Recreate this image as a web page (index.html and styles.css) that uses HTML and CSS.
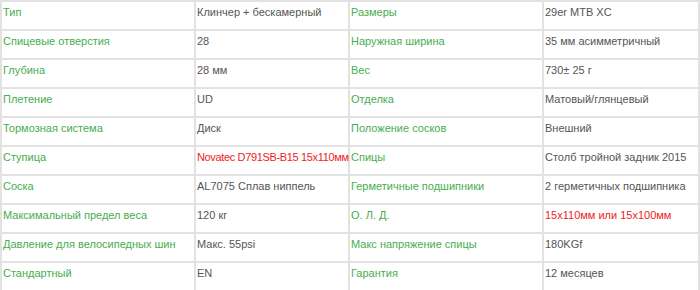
FILE: index.html
```html
<!DOCTYPE html>
<html lang="ru">
<head>
<meta charset="utf-8">
<link rel="stylesheet" href="styles.css">
</head>
<body>
<table class="spec">
  <tr>
    <td class="k c1">Тип</td><td class="v c2">Клинчер + бескамерный</td>
    <td class="k c3">Размеры</td><td class="v c4">29er MTB XC</td>
  </tr>
  <tr>
    <td class="k">Спицевые отверстия</td><td class="v">28</td>
    <td class="k">Наружная ширина</td><td class="v">35 мм асимметричный</td>
  </tr>
  <tr>
    <td class="k">Глубина</td><td class="v">28 мм</td>
    <td class="k">Вес</td><td class="v">730± 25 г</td>
  </tr>
  <tr>
    <td class="k">Плетение</td><td class="v">UD</td>
    <td class="k">Отделка</td><td class="v">Матовый/глянцевый</td>
  </tr>
  <tr>
    <td class="k">Тормозная система</td><td class="v">Диск</td>
    <td class="k">Положение сосков</td><td class="v">Внешний</td>
  </tr>
  <tr>
    <td class="k">Ступица</td><td class="v red tight">Novatec D791SB-B15 15x110мм</td>
    <td class="k">Спицы</td><td class="v">Столб тройной задник 2015</td>
  </tr>
  <tr>
    <td class="k">Соска</td><td class="v">AL7075 Сплав ниппель</td>
    <td class="k">Герметичные подшипники</td><td class="v">2 герметичных подшипника</td>
  </tr>
  <tr>
    <td class="k">Максимальный предел веса</td><td class="v">120 кг</td>
    <td class="k">О. Л. Д.</td><td class="v red">15x110мм или 15x100мм</td>
  </tr>
  <tr>
    <td class="k">Давление для велосипедных шин</td><td class="v">Макс. 55psi</td>
    <td class="k">Макс напряжение спицы</td><td class="v">180KGf</td>
  </tr>
  <tr>
    <td class="k">Стандартный</td><td class="v">EN</td>
    <td class="k">Гарантия</td><td class="v">12 месяцев</td>
  </tr>
</table>
</body>
</html>
```
FILE: styles.css
```css
html, body {
  margin: 0;
  padding: 0;
  background: #fff;
}
.spec {
  width: 700px;
  table-layout: fixed;
  border-collapse: separate;
  border-spacing: 0;
  border: 1px solid #e2e2e2;
  font-family: "Liberation Sans", Arial, sans-serif;
  font-size: 11px;
}
.spec td {
  box-sizing: border-box;
  height: 29px;
  border: 1px solid #e2e2e2;
  padding: 2px 0 9px 1px;
  vertical-align: top;
  line-height: 16px;
  white-space: nowrap;
}
.c1 { width: 194px; }
.c2 { width: 154px; }
.c3 { width: 194px; }
.c4 { width: 156px; }
.k { color: #47ad4f; }
.v { color: #555; }
.v.red { color: #f0221c; }
.v.tight { letter-spacing: -0.35px; }
```
